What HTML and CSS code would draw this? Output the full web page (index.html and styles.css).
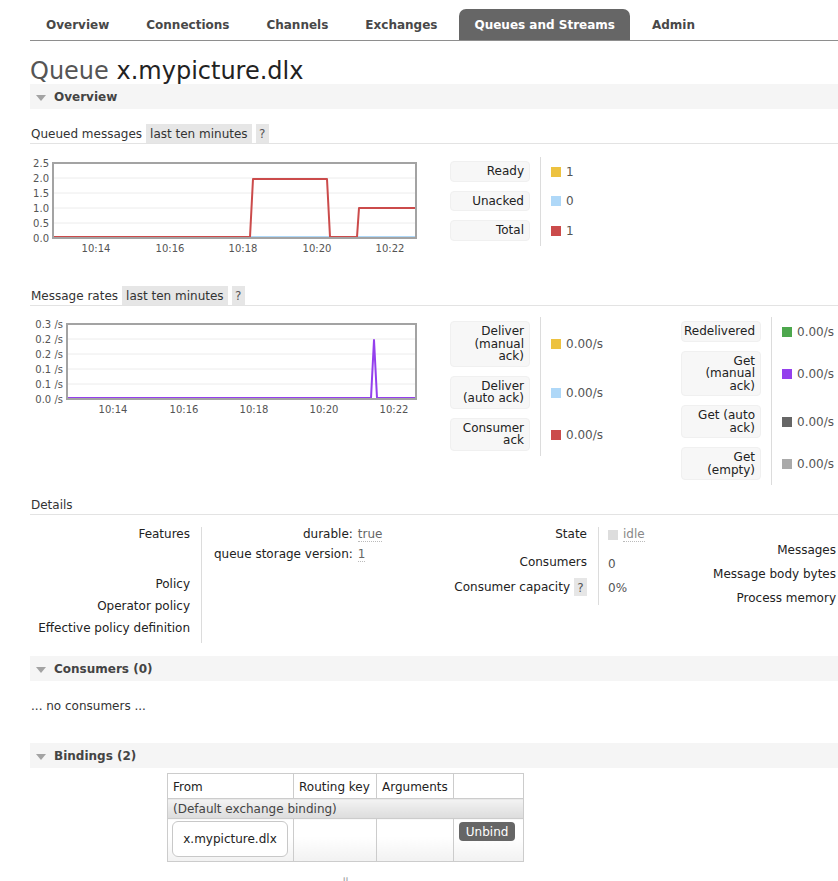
FILE: index.html
```html
<!DOCTYPE html>
<html>
<head>
<meta charset="utf-8">
<title>Queue x.mypicture.dlx</title>
<link rel="stylesheet" href="styles.css">
</head>
<body>
<div class="page">
  <nav class="menu">
    <ul>
      <li>Overview</li>
      <li>Connections</li>
      <li>Channels</li>
      <li>Exchanges</li>
      <li class="active">Queues and Streams</li>
      <li>Admin</li>
    </ul>
  </nav>

  <h1><span class="h1-kind">Queue</span> <span class="h1-name">x.mypicture.dlx</span></h1>

  <h2 class="section-head"><span class="tri"></span>Overview</h2>

  <div class="sub-head sub-first"><span class="sub-label">Queued messages</span><span class="range">last ten minutes</span><span class="help">?</span></div>
  <div class="chart-row">
    <svg class="chart" width="420" height="104" viewBox="0 0 420 104">
      <g class="grid">
        <line x1="23" x2="386" y1="25" y2="25"/>
        <line x1="23" x2="386" y1="40" y2="40"/>
        <line x1="23" x2="386" y1="55" y2="55"/>
        <line x1="23" x2="386" y1="70" y2="70"/>
      </g>
      <polyline class="s-unacked" points="23,84 386,84"/>
      <polyline class="s-total" points="23,84 220,84 223,26 297,26 300,84 327,84 329,55 386,55"/>
      <rect class="frame" x="23" y="10" width="363" height="75"/>
      <g class="ylab">
        <text x="19" y="13.5">2.5</text>
        <text x="19" y="28.5">2.0</text>
        <text x="19" y="43.5">1.5</text>
        <text x="19" y="58.5">1.0</text>
        <text x="19" y="73.5">0.5</text>
        <text x="19" y="88.5">0.0</text>
      </g>
      <g class="xlab">
        <text x="66" y="99">10:14</text>
        <text x="140" y="99">10:16</text>
        <text x="213" y="99">10:18</text>
        <text x="287" y="99">10:20</text>
        <text x="360" y="99">10:22</text>
      </g>
    </svg>
    <div class="legend legend-q">
      <div class="lg-k"><span class="lg-box">Ready</span></div>
      <div class="lg-v"><i class="sw sw-yellow"></i>1</div>
      <div class="lg-k"><span class="lg-box">Unacked</span></div>
      <div class="lg-v"><i class="sw sw-blue"></i>0</div>
      <div class="lg-k"><span class="lg-box">Total</span></div>
      <div class="lg-v"><i class="sw sw-red"></i>1</div>
    </div>
  </div>

  <div class="sub-head sub-rates"><span class="sub-label">Message rates</span><span class="range">last ten minutes</span><span class="help">?</span></div>
  <div class="chart-row chart-row-rates">
    <svg class="chart" width="420" height="104" viewBox="0 0 420 104">
      <g class="grid">
        <line x1="37" x2="386" y1="25" y2="25"/>
        <line x1="37" x2="386" y1="40" y2="40"/>
        <line x1="37" x2="386" y1="55" y2="55"/>
        <line x1="37" x2="386" y1="70" y2="70"/>
      </g>
      <polyline class="s-purple" points="37,84 341,84 344,26 347,84 386,84"/>
      <rect class="frame" x="37" y="10" width="349" height="75"/>
      <g class="ylab">
        <text x="33" y="13.5">0.3 /s</text>
        <text x="33" y="28.5">0.2 /s</text>
        <text x="33" y="43.5">0.2 /s</text>
        <text x="33" y="58.5">0.1 /s</text>
        <text x="33" y="73.5">0.1 /s</text>
        <text x="33" y="88.5">0.0 /s</text>
      </g>
      <g class="xlab">
        <text x="83" y="99">10:14</text>
        <text x="154" y="99">10:16</text>
        <text x="224" y="99">10:18</text>
        <text x="294" y="99">10:20</text>
        <text x="364" y="99">10:22</text>
      </g>
    </svg>
    <div class="legends">
      <div class="legend legend-left">
        <div class="lg-k"><span class="lg-box">Deliver<br>(manual<br>ack)</span></div>
        <div class="lg-v"><i class="sw sw-yellow"></i>0.00/s</div>
        <div class="lg-k"><span class="lg-box">Deliver<br>(auto ack)</span></div>
        <div class="lg-v"><i class="sw sw-blue"></i>0.00/s</div>
        <div class="lg-k"><span class="lg-box">Consumer<br>ack</span></div>
        <div class="lg-v"><i class="sw sw-red"></i>0.00/s</div>
      </div>
      <div class="legend legend-right">
        <div class="lg-k"><span class="lg-box">Redelivered</span></div>
        <div class="lg-v"><i class="sw sw-green"></i>0.00/s</div>
        <div class="lg-k"><span class="lg-box">Get<br>(manual<br>ack)</span></div>
        <div class="lg-v"><i class="sw sw-purple"></i>0.00/s</div>
        <div class="lg-k"><span class="lg-box">Get (auto<br>ack)</span></div>
        <div class="lg-v"><i class="sw sw-dark"></i>0.00/s</div>
        <div class="lg-k"><span class="lg-box">Get<br>(empty)</span></div>
        <div class="lg-v"><i class="sw sw-grey"></i>0.00/s</div>
      </div>
    </div>
  </div>

  <div class="sub-head sub-details"><span class="sub-label">Details</span></div>
  <div class="details">
    <div class="facts facts-a">
      <div class="k first">Features</div>
      <div class="v first feat">
        <div class="kv">
          <span class="kv-k">durable:</span><span class="kv-v"><abbr>true</abbr></span>
          <span class="kv-k">queue storage version:</span><span class="kv-v"><abbr>1</abbr></span>
        </div>
      </div>
      <div class="k">Policy</div>
      <div class="v"></div>
      <div class="k">Operator policy</div>
      <div class="v"></div>
      <div class="k last">Effective policy definition</div>
      <div class="v last"></div>
    </div>

    <div class="facts facts-b">
      <div class="k first state-k">State</div>
      <div class="v first state-v"><i class="sw sw-idle"></i><abbr class="idle">idle</abbr></div>
      <div class="k cons-k">Consumers</div>
      <div class="v cons-v">0</div>
      <div class="k cap-k">Consumer capacity <span class="help help-inline">?</span></div>
      <div class="v cap-v">0%</div>
    </div>

    <div class="facts facts-c">
      <div class="k">Messages</div>
      <div class="v"></div>
      <div class="k">Message body bytes</div>
      <div class="v"></div>
      <div class="k">Process memory</div>
      <div class="v"></div>
    </div>
  </div>

  <h2 class="section-head head-consumers"><span class="tri"></span>Consumers (0)</h2>
  <p class="empty">... no consumers ...</p>

  <h2 class="section-head head-bindings"><span class="tri"></span>Bindings (2)</h2>
  <div class="bindings">
    <table class="btable">
      <thead>
        <tr>
          <th class="col-from">From</th>
          <th class="col-key">Routing key</th>
          <th class="col-args">Arguments</th>
          <th class="col-act"></th>
        </tr>
      </thead>
      <tbody>
        <tr class="grp"><td colspan="4">(Default exchange binding)</td></tr>
        <tr class="brow">
          <td><span class="xbox">x.mypicture.dlx</span></td>
          <td></td>
          <td></td>
          <td><span class="unbind">Unbind</span></td>
        </tr>
      </tbody>
    </table>
    <div class="arrow">⇓</div>
  </div>
</div>
</body>
</html>
```
FILE: styles.css
```css
html { overflow: hidden; }
body {
  margin: 0;
  background: #fff;
  color: #222;
  font-family: "DejaVu Sans", Verdana, sans-serif;
  font-size: 12px;
}
.page { padding-left: 30px; overflow: hidden; }

/* nav */
.menu { padding-top: 9px; }
.menu ul {
  list-style: none;
  margin: 0;
  padding: 0 0 0 1px;
  display: flex;
  gap: 7px;
  border-bottom: 1px solid #8e8e8e;
}
.menu li {
  height: 31px;
  box-sizing: border-box;
  padding: 1px 15px 0;
  line-height: 30px;
  font-weight: bold;
  font-size: 12px;
  color: #484848;
  border-radius: 7px 7px 0 0;
  white-space: nowrap;
}
.menu li.active { background: #666; color: #fff; }

/* title */
h1 {
  margin: 17px 0 0;
  font-size: 24px;
  line-height: 26px;
  font-weight: normal;
  white-space: nowrap;
}
.h1-kind { color: #555; }
.h1-name { color: #222; }

/* section headers */
.section-head {
  margin: 0;
  height: 25px;
  box-sizing: border-box;
  padding-top: 2px;
  line-height: 23px;
  background: #f5f5f5;
  font-size: 12px;
  font-weight: bold;
  color: #444;
  display: flex;
  align-items: center;
}
.tri {
  width: 0;
  height: 0;
  border-left: 5.5px solid transparent;
  border-right: 5.5px solid transparent;
  border-top: 6px solid #a3a3a3;
  margin: 0 8px 0 6px;
}
.head-consumers { margin-top: 13px; }
.head-bindings { margin-top: 29px; }

/* sub headers */
.sub-head {
  display: flex;
  align-items: flex-end;
  border-bottom: 1px solid #e3e3e3;
  line-height: 15px;
  color: #333;
}
.sub-label { padding: 3px 0 1px 1px; }
.range {
  background: #e6e6e6;
  padding: 3px 4px 1px;
  margin-left: 4px;
}
.help {
  background: #e6e6e6;
  padding: 3px 0 1px;
  width: 13px;
  text-align: center;
  margin-left: 4px;
  color: #555;
}
.sub-first { margin-top: 15px; }
.sub-rates { margin-top: 29px; }
.sub-details { margin-top: 10px; }

/* charts */
.chart-row {
  display: flex;
  align-items: flex-start;
  margin-top: 9px;
}
.chart-row-rates { margin-top: 8px; }
.chart { display: block; flex-shrink: 0; }
.chart .grid line { stroke: #ececec; stroke-width: 1; }
.chart .frame { fill: none; stroke: #a3a3a3; stroke-width: 2; }
.chart polyline { fill: none; stroke-width: 2; stroke-linejoin: round; }
.s-unacked { stroke: #afd8f8; }
.s-total { stroke: #cb4b4b; }
.s-purple { stroke: #9440ed; }
.chart text {
  font-family: "DejaVu Sans", Verdana, sans-serif;
  font-size: 10px;
  fill: #545454;
}
.ylab text { text-anchor: end; }
.xlab text { text-anchor: middle; }

/* legends */
.legend {
  display: grid;
  grid-template-columns: 90px 141px;
  align-content: start;
  flex-shrink: 0;
}
.legend-q { margin-top: 4px; }
.legends { display: flex; align-items: flex-start; margin-top: 3px; }
.legend-right { grid-template-columns: 90px 120px; }
.lg-k { padding: 4px 0 5px; }
.lg-box {
  display: block;
  width: 80px;
  box-sizing: border-box;
  padding: 3px 5px 3px 2px;
  text-align: right;
  background: #f7f7f7;
  border: 1px solid #f0f0f0;
  border-radius: 4px;
  line-height: 12.5px;
  color: #222;
}
.lg-v {
  border-left: 1px solid #dcdcdc;
  padding-left: 10px;
  display: flex;
  align-items: center;
  color: #555;
}
.sw {
  display: inline-block;
  width: 10px;
  height: 10px;
  margin-right: 5px;
  flex-shrink: 0;
}
.sw-yellow { background: #edc240; }
.sw-blue { background: #afd8f8; }
.sw-red { background: #cb4b4b; }
.sw-green { background: #4da74d; }
.sw-purple { background: #9440ed; }
.sw-dark { background: #666; }
.sw-grey { background: #aaa; }
.sw-idle { background: #ddd; }

/* details */
.details {
  display: flex;
  margin-top: 12px;
}
.facts {
  display: grid;
  flex-shrink: 0;
  line-height: 14px;
  align-content: start;
}
.facts .k {
  text-align: right;
  padding: 4px 11px 4px 0;
  white-space: nowrap;
}
.facts .v {
  border-left: 1px solid #dcdcdc;
  padding: 4px 0;
  color: #555;
}
.facts .first { padding-top: 0; }
.facts .last { padding-bottom: 8px; }

.facts-a { width: 410px; grid-template-columns: 171px 1fr; }
.facts-a .v { padding-left: 12px; }
.facts-a .feat { padding-bottom: 12px; }
.kv {
  display: grid;
  grid-template-columns: auto auto;
  justify-content: start;
  column-gap: 5px;
  row-gap: 6px;
}
.kv-k { text-align: right; color: #222; }
.kv-v abbr, .idle {
  text-decoration: none;
  border-bottom: 1px dotted #bbb;
  color: #666;
}

.facts-b { width: 260px; grid-template-columns: 158px 1fr; }
.facts-b .v { padding-left: 9px; }
.facts-b .state-k, .facts-b .state-v { padding-bottom: 9px; }
.facts-b .state-v { display: flex; align-items: center; }
.facts-b .cons-v { padding: 6px 0 2px 9px; }
.facts-b .cap-k {
  padding: 5px 11px 9px 0;
  display: flex;
  justify-content: flex-end;
  align-items: center;
  gap: 4px;
}
.help-inline { padding: 3px 0 1px; line-height: 14px; margin-left: 0; }
.facts-b .cap-v { padding: 8px 0 0 9px; }
.idle { color: #888; }

.facts-c {
  width: 300px;
  grid-template-columns: 147px 1fr;
  padding-top: 11px;
}
.facts-c .k { padding: 5px 11px 5px 0; }
.facts-c .v { padding: 5px 0 5px 10px; }

/* consumers */
.empty {
  margin: 18px 0 0 1px;
  line-height: 15px;
  color: #333;
}

/* bindings */
.bindings {
  display: inline-block;
  margin: 5px 0 0 137px;
}
.btable {
  border-collapse: collapse;
  border: 1px solid #ccc;
  width: 357px;
}
.btable th {
  height: 23px;
  padding: 1px 5px 0;
  text-align: left;
  font-weight: normal;
  color: #222;
  border: 1px solid #ccc;
  white-space: nowrap;
}
.col-from { width: 115px; }
.col-key { width: 72px; }
.col-args { width: 65px; }
.btable .grp td {
  height: 18px;
  padding: 1px 5px 0;
  line-height: 15px;
  color: #444;
  background: linear-gradient(#f3f3f3, #dcdcdc);
  border: 1px solid #ccc;
}
.btable .brow td {
  padding: 3px 5px 4px;
  vertical-align: top;
  border: 1px solid #ccc;
  background: linear-gradient(#fff 40%, #f2f2f2);
}
.btable .brow td:first-child { padding: 2px 4px 4px 4px; }
.xbox {
  display: block;
  width: 116px;
  height: 36px;
  box-sizing: border-box;
  line-height: 35px;
  text-align: center;
  background: #fff;
  border: 1px solid #c8c8c8;
  border-radius: 6px;
  color: #222;
  white-space: nowrap;
}
.unbind {
  display: inline-block;
  background: #666;
  color: #fff;
  border-radius: 4px;
  padding: 1px 7px 0;
  line-height: 18px;
}
.arrow {
  text-align: center;
  color: #999;
  font-size: 16px;
  line-height: 20px;
  margin-top: 12px;
}
```
